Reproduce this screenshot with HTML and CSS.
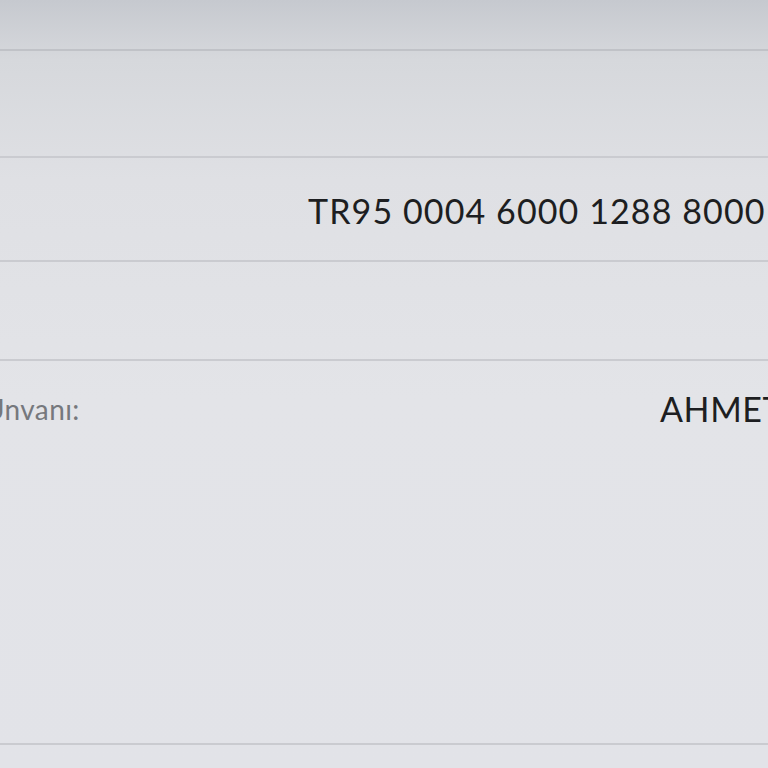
FILE: index.html
```html
<!DOCTYPE html>
<html lang="tr">
<head>
<meta charset="utf-8">
<title>Dekont</title>
<link rel="stylesheet" href="styles.css">
</head>
<body>
<div class="sheet">
  <div class="row row-1"></div>
  <div class="row row-2"></div>
  <div class="row row-3"><span class="value value-iban">TR95 0004 6000 1288 8000 0000 00</span></div>
  <div class="row row-4"></div>
  <div class="row row-5">
    <span class="label">Ünvanı:</span>
    <span class="value value-name">AHMET YILMAZ</span>
  </div>
  <div class="row row-6"></div>
</div>
</body>
</html>
```
FILE: styles.css
```css
html, body {
  margin: 0;
  padding: 0;
}
body {
  width: 768px;
  height: 768px;
  overflow: hidden;
  background: linear-gradient(180deg, #c6c9cf 0px, #d6d8dc 60px, #dfe0e4 180px, #e3e4e8 400px, #e2e3e8 768px);
  font-family: "Lato", "Noto Sans", sans-serif;
}
.sheet {
  display: flex;
  flex-direction: column;
  width: 768px;
}
.row {
  display: flex;
  align-items: center;
  border-bottom: 2px solid #cacbd0;
  box-sizing: border-box;
  white-space: nowrap;
  overflow: hidden;
}
.row-1 { height: 51px; border-bottom-color: #c0c2c7; }
.row-2 { height: 107px; }
.row-3 { height: 104px; }
.row-4 { height: 99px; }
.row-5 { height: 384px; align-items: flex-start; padding-top: 27px; }
.row-6 { height: 40px; border-bottom: none; }
.value {
  font-size: 34px;
  color: #1d1e21;
}
.value-iban {
  padding-left: 308px;
  padding-top: 2px;
  letter-spacing: 1.1px;
}
.value-name {
  letter-spacing: 0.6px;
}
.label {
  font-size: 28px;
  color: #76787d;
  margin-left: -16px;
  width: 676px;
  flex: none;
  padding-top: 4px;
  letter-spacing: 0.4px;
}
```
